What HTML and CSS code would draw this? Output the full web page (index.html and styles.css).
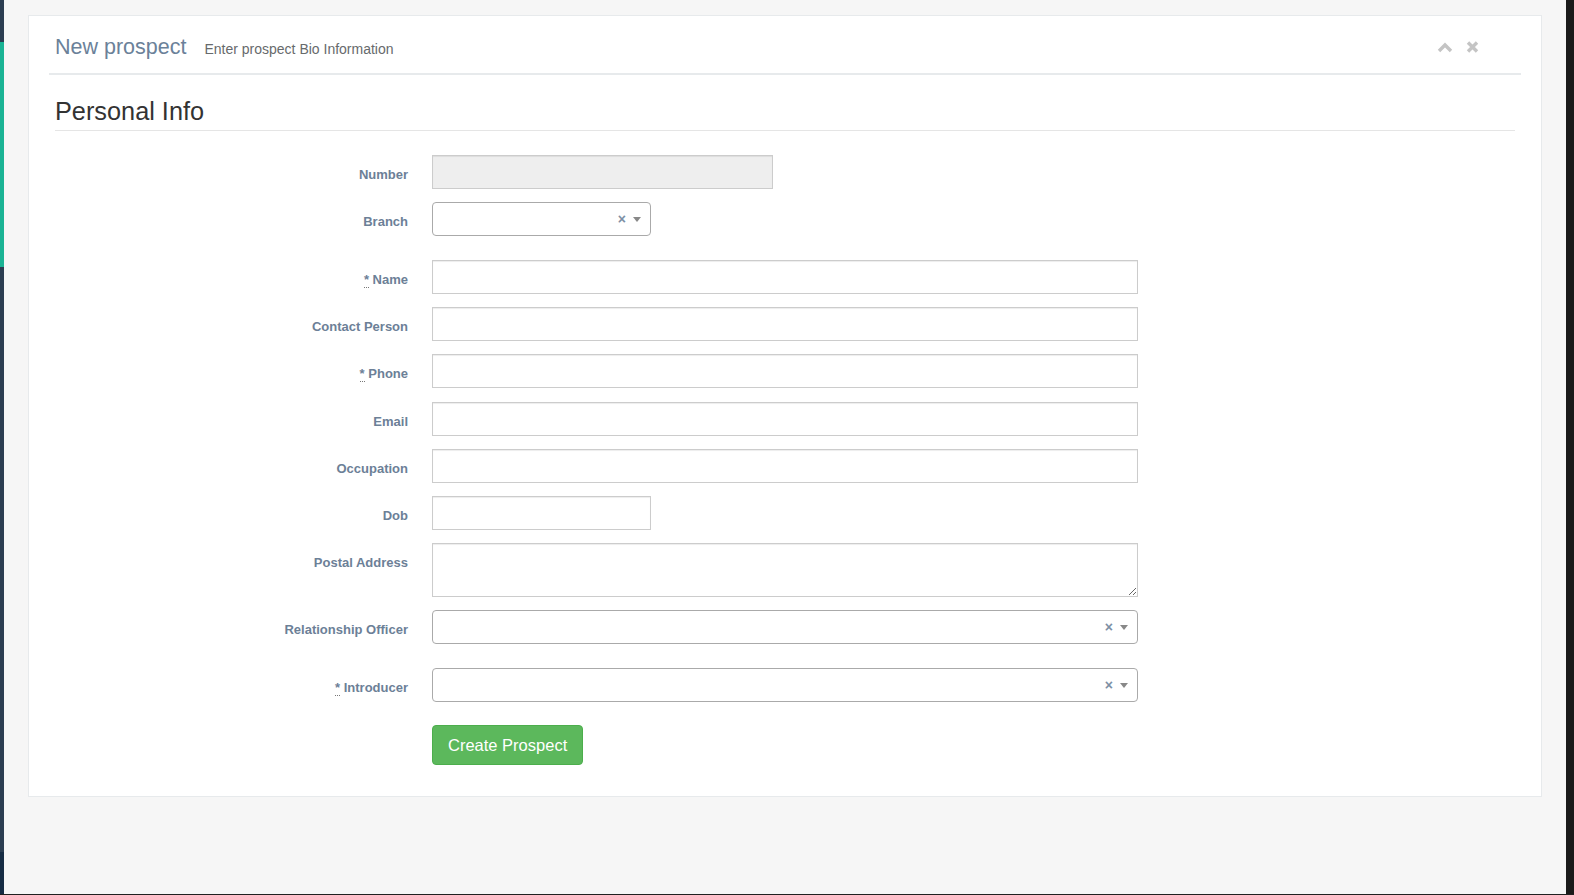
FILE: index.html
```html
<!DOCTYPE html>
<html>
<head>
    <meta charset="utf-8">
    <meta name="viewport" content="width=device-width, initial-scale=1">
    <title>New prospect</title>
    <link rel="stylesheet" href="styles.css">
</head>
<body>
    <div class="frame">
        <!-- collapsed side menu -->
        <div class="nav-edge">
            <div class="edge-top"></div>
            <div class="edge-active"></div>
            <div class="edge-rest"></div>
            <div class="edge-foot"></div>
        </div>

        <main class="page">
            <div class="ibox">
                <div class="ibox-title">
                    <h5>New prospect</h5>
                    <small>Enter prospect Bio Information</small>
                    <div class="ibox-tools">
                        <svg width="16" height="11" viewBox="0 0 16 11"><polyline points="2,9 8,3 14,9" fill="none" stroke="#c4c4c4" stroke-width="3.4"/></svg>
                        <svg width="13" height="12" viewBox="0 0 13 12"><path d="M2 1.5 L11 10.5 M11 1.5 L2 10.5" stroke="#c4c4c4" stroke-width="3.4"/></svg>
                    </div>
                </div>

                <div class="ibox-content">
                    <form class="form-horizontal" onsubmit="return false">
                        <legend>Personal Info</legend>

                        <div class="form-group">
                            <label class="control-label">Number</label>
                            <input type="text" class="form-control input-number" readonly>
                        </div>

                        <div class="form-group select-group">
                            <label class="control-label">Branch</label>
                            <div class="select2 select-short">
                                <span class="select2-clear">&times;</span>
                                <b class="select2-arrow"></b>
                            </div>
                        </div>

                        <div class="form-group">
                            <label class="control-label"><abbr title="required">*</abbr> Name</label>
                            <input type="text" class="form-control">
                        </div>

                        <div class="form-group">
                            <label class="control-label">Contact Person</label>
                            <input type="text" class="form-control">
                        </div>

                        <div class="form-group">
                            <label class="control-label"><abbr title="required">*</abbr> Phone</label>
                            <input type="text" class="form-control">
                        </div>

                        <div class="form-group">
                            <label class="control-label">Email</label>
                            <input type="text" class="form-control">
                        </div>

                        <div class="form-group">
                            <label class="control-label">Occupation</label>
                            <input type="text" class="form-control">
                        </div>

                        <div class="form-group">
                            <label class="control-label">Dob</label>
                            <input type="text" class="form-control input-short">
                        </div>

                        <div class="form-group">
                            <label class="control-label">Postal Address</label>
                            <textarea class="form-control"></textarea>
                        </div>

                        <div class="form-group select-group">
                            <label class="control-label">Relationship Officer</label>
                            <div class="select2">
                                <span class="select2-clear">&times;</span>
                                <b class="select2-arrow"></b>
                            </div>
                        </div>

                        <div class="form-group select-group last-select">
                            <label class="control-label"><abbr title="required">*</abbr> Introducer</label>
                            <div class="select2">
                                <span class="select2-clear">&times;</span>
                                <b class="select2-arrow"></b>
                            </div>
                        </div>

                        <div class="form-group">
                            <span></span>
                            <div><button type="submit" class="btn-success">Create Prospect</button></div>
                        </div>
                    </form>
                </div>
            </div>
        </main>

        <div class="scroll-edge"></div>
    </div>
    <div class="bottom-edge"></div>
</body>
</html>
```

FILE: styles.css
```css
html, body {
    margin: 0;
    padding: 0;
}

body {
    font-family: "Liberation Sans", Arial, sans-serif;
    height: 895px;
    overflow: hidden;
    background-color: #f6f6f6;
    color: #676a6c;
}

.frame {
    display: flex;
    height: 894px;
}

.bottom-edge {
    height: 1px;
    background: #202020;
}

.nav-edge {
    width: 4px;
    display: flex;
    flex-direction: column;
}

.edge-top {
    height: 42px;
    background: #2b3d51;
}

.edge-active {
    height: 225px;
    background: #1ab394;
}

.edge-rest {
    flex: 1;
    background: #2b3d51;
}

.edge-foot {
    height: 42px;
    background: #162c44;
}

.scroll-edge {
    width: 8px;
    background: #1a1a1a;
}

.page {
    flex: 1;
    padding: 15px 24px 0 24px;
}

.ibox {
    background: white;
    border: 1px solid #e7eaec;
    height: 780px;
}

.ibox-title {
    display: flex;
    align-items: baseline;
    margin: 0 20px;
    padding: 19px 42px 14px 6px;
    border-bottom: 2px solid #e7eaec;
}

.ibox-title h5 {
    margin: 0;
    font-size: 21.5px;
    line-height: 24px;
    font-weight: normal;
    color: #6b8199;
}

.ibox-title small {
    margin-left: 18px;
    font-size: 14px;
    color: #676a6c;
}

.ibox-tools {
    margin-left: auto;
    align-self: center;
    display: flex;
    align-items: center;
    gap: 13px;
}

.ibox-tools svg {
    display: block;
}

.ibox-content {
    padding: 0 26px;
}

legend {
    display: block;
    width: 100%;
    margin: 21px 0 24px 0;
    padding: 0 0 4px 0;
    font-size: 25.3px;
    line-height: 30px;
    color: #333;
    border-bottom: 1px solid #e5e5e5;
}

.form-group {
    display: grid;
    grid-template-columns: 353px 706px;
    column-gap: 24px;
    margin-bottom: 13.15px;
}

.select-group {
    margin-bottom: 24px;
}

.last-select {
    margin-bottom: 23px;
}

.control-label {
    padding-top: 11px;
    font-size: 13px;
    line-height: 18px;
    font-weight: bold;
    color: #6c8097;
    text-align: right;
}

abbr {
    text-decoration: none;
    border-bottom: 1px dotted #777;
}

.form-control {
    box-sizing: border-box;
    width: 100%;
    height: 34px;
    margin: 0;
    padding: 6px 12px;
    border: 1px solid #ccc;
    border-radius: 0;
    box-shadow: inset 0 1px 1px rgba(0,0,0,0.075);
    font-family: inherit;
    font-size: 14px;
    background: white;
}

.input-number {
    width: 341px;
    background: #eee;
}

.input-short {
    width: 219px;
}

textarea.form-control {
    height: 54px;
}

.select2 {
    box-sizing: border-box;
    height: 34px;
    border: 1px solid #aaa;
    border-radius: 4px;
    display: flex;
    align-items: center;
    justify-content: flex-end;
    gap: 7px;
    padding-right: 9px;
}

.select-short {
    width: 219px;
}

.select2-clear {
    font-size: 14px;
    font-weight: bold;
    color: #7d8fa5;
    line-height: 14px;
}

.select2-arrow {
    width: 0;
    height: 0;
    border-style: solid;
    border-width: 5px 4px 0 4px;
    border-color: #888 transparent transparent transparent;
}

.btn-success {
    background: #5cb85c;
    color: white;
    border: 1px solid #4cae4c;
    border-radius: 4px;
    padding: 8px 15px;
    font-family: inherit;
    font-size: 16.5px;
    line-height: 22px;
    cursor: pointer;
}

.btn-success:hover {
    background: #449d44;
}
```
